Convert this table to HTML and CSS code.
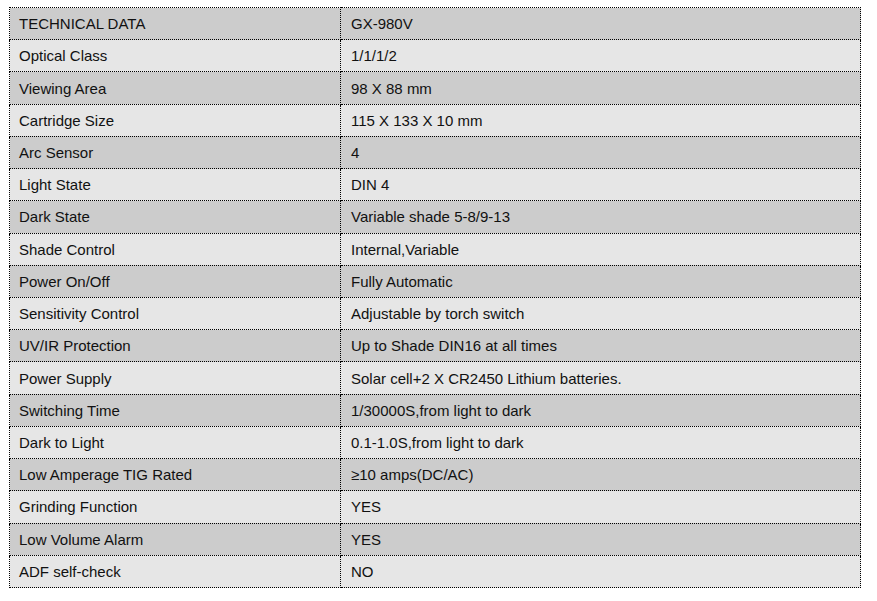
FILE: index.html
```html
<!DOCTYPE html>
<html>
<head>
<meta charset="utf-8">
<link rel="stylesheet" href="styles.css">
</head>
<body>
<table class="spec">
<tr><td class="k">TECHNICAL DATA</td><td class="v">GX-980V</td></tr>
<tr><td class="k">Optical Class</td><td class="v">1/1/1/2</td></tr>
<tr><td class="k">Viewing Area</td><td class="v">98 X 88 mm</td></tr>
<tr><td class="k">Cartridge Size</td><td class="v">115 X 133 X 10 mm</td></tr>
<tr><td class="k">Arc Sensor</td><td class="v">4</td></tr>
<tr><td class="k">Light State</td><td class="v">DIN 4</td></tr>
<tr><td class="k">Dark State</td><td class="v">Variable shade 5-8/9-13</td></tr>
<tr><td class="k">Shade Control</td><td class="v">Internal,Variable</td></tr>
<tr><td class="k">Power On/Off</td><td class="v">Fully Automatic</td></tr>
<tr><td class="k">Sensitivity Control</td><td class="v">Adjustable by torch switch</td></tr>
<tr><td class="k">UV/IR Protection</td><td class="v">Up to Shade DIN16 at all times</td></tr>
<tr><td class="k">Power Supply</td><td class="v">Solar cell+2 X CR2450 Lithium batteries.</td></tr>
<tr><td class="k">Switching Time</td><td class="v">1/30000S,from light to dark</td></tr>
<tr><td class="k">Dark to Light</td><td class="v">0.1-1.0S,from light to dark</td></tr>
<tr><td class="k">Low Amperage TIG Rated</td><td class="v">≥10 amps(DC/AC)</td></tr>
<tr><td class="k">Grinding Function</td><td class="v">YES</td></tr>
<tr><td class="k">Low Volume Alarm</td><td class="v">YES</td></tr>
<tr><td class="k">ADF self-check</td><td class="v">NO</td></tr>
</table>
</body>
</html>
```
FILE: styles.css
```css
html, body {
  margin: 0;
  padding: 0;
  background: #ffffff;
}
body {
  padding: 7px 0 0 9px;
  font-family: "Liberation Sans", Arial, sans-serif;
  font-size: 15px;
  color: #111111;
}
.spec {
  border-collapse: collapse;
  width: 852px;
  height: 581px;
}
.spec td {
  border: 1px dotted #000000;
  padding: 0 0 0 9px;
  vertical-align: middle;
  white-space: nowrap;
}
.spec tr:nth-child(odd) td {
  background: #cccccc;
}
.spec tr:nth-child(even) td {
  background: #e6e6e6;
}
.spec td.k {
  width: 321px;
}
.spec td.v {
  padding-left: 10px;
}
```
